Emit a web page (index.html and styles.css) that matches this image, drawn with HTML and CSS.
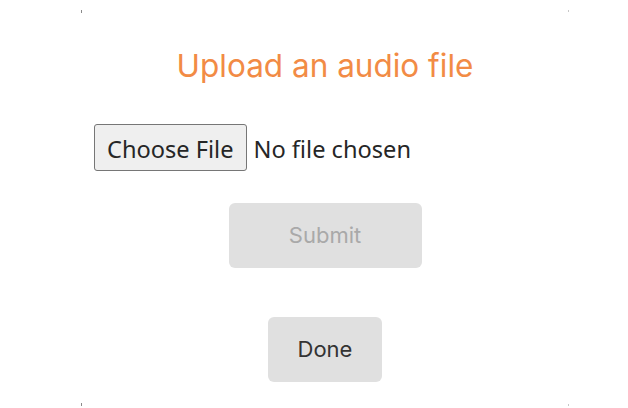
FILE: index.html
```html
<!DOCTYPE html>
<html lang="en">
<head>
<meta charset="utf-8">
<title>Upload an audio file</title>
<link rel="stylesheet" href="styles.css">
</head>
<body>
<main class="card">
  <h1 class="title">Upload an audio file</h1>
  <form class="upload-form">
    <input class="file-input" type="file" accept="audio/*">
    <button class="btn btn-submit" type="submit" disabled>Submit</button>
  </form>
  <button class="btn btn-done" type="button">Done</button>
</main>
</body>
</html>
```

FILE: styles.css
```css
html, body {
  margin: 0;
  padding: 0;
  background: #ffffff;
}

.card {
  box-sizing: border-box;
  width: 488px;
  height: 396px;
  margin: 10px 0 0 81px;
  padding: 37px 13px 0 13px;
  display: flex;
  flex-direction: column;
  align-items: center;
  background-image:
    linear-gradient(#8a8a8a, #8a8a8a),
    linear-gradient(#c8c8c8, #c8c8c8),
    linear-gradient(#8a8a8a, #8a8a8a),
    linear-gradient(#c8c8c8, #c8c8c8);
  background-size: 1px 3px, 1px 2px, 1px 3px, 1px 2px;
  background-position: left top, right top, left bottom, right bottom;
  background-repeat: no-repeat;
}

.title {
  margin: 0;
  font-family: "Inter", "Liberation Sans", sans-serif;
  font-weight: 400;
  font-size: 31.5px;
  line-height: 38px;
  color: #f28b45;
  text-align: center;
}

.upload-form {
  align-self: stretch;
  display: flex;
  flex-direction: column;
  align-items: center;
  margin-top: 39px;
}

.file-input {
  align-self: flex-start;
  font-family: "Noto Sans", "Open Sans", sans-serif;
  font-size: 23.6px;
  color: #262626;
  height: 47px;
}

.file-input::file-selector-button {
  font-family: "Noto Sans", "Open Sans", sans-serif;
  font-size: 23.6px;
  color: #262626;
  background: #efefef;
  border: 1px solid #767676;
  border-radius: 3px;
  padding: 3px 12px 0;
  height: 47px;
  margin-right: 7px;
}

.btn {
  font-family: "Inter", "Liberation Sans", sans-serif;
  font-size: 22px;
  border: none;
  border-radius: 6px;
  background: #e0e0e0;
  height: 65px;
  padding: 0 0 2px;
}

.btn-submit {
  margin-top: 32px;
  width: 193px;
  color: #a9a9a9;
}

.btn-done {
  margin-top: 49px;
  width: 114px;
  color: #333333;
}
```
